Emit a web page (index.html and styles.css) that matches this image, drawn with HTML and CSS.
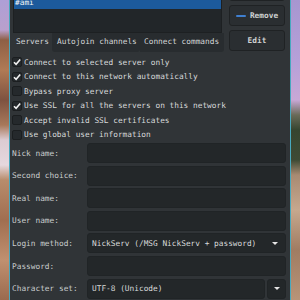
FILE: index.html
```html
<!DOCTYPE html>
<html lang="en">
<head>
    <meta charset="UTF-8">
    <meta name="viewport" content="width=device-width, initial-scale=1.0">
    <title>Network editor</title>
    <link rel="stylesheet" href="styles.css">
</head>
<body>
    <div class="wall wall_left"></div>
    <div class="window">
        <div class="top">
            <div class="notebook">
                <div class="server_list">
                    <div class="row selected">#ami</div>
                </div>
                <div class="tabs">
                    <div class="tab active tab_servers">Servers</div>
                    <div class="tab tab_autojoin">Autojoin channels</div>
                    <div class="tab tab_connect">Connect commands</div>
                </div>
            </div>
            <div class="buttons">
                <div class="btn">Add</div>
                <div class="btn"><span class="minus"></span>Remove</div>
                <div class="btn">Edit</div>
            </div>
        </div>

        <ul class="checks">
            <li><span class="box checked"><svg viewBox="0 0 10 10"><path d="M2 5.2 L4.1 7.3 L8.2 2.4"/></svg></span>Connect to selected server only</li>
            <li><span class="box checked"><svg viewBox="0 0 10 10"><path d="M2 5.2 L4.1 7.3 L8.2 2.4"/></svg></span>Connect to this network automatically</li>
            <li><span class="box"></span>Bypass proxy server</li>
            <li><span class="box checked"><svg viewBox="0 0 10 10"><path d="M2 5.2 L4.1 7.3 L8.2 2.4"/></svg></span>Use SSL for all the servers on this network</li>
            <li><span class="box"></span>Accept invalid SSL certificates</li>
            <li><span class="box"></span>Use global user information</li>
        </ul>

        <div class="form">
            <label>Nick name:</label>
            <div class="field"></div>
            <label>Second choice:</label>
            <div class="field"></div>
            <label>Real name:</label>
            <div class="field"></div>
            <label>User name:</label>
            <div class="field"></div>
            <label>Login method:</label>
            <div class="field combo">NickServ (/MSG NickServ + password)<span class="arrow"></span></div>
            <label>Password:</label>
            <div class="field"></div>
            <label>Character set:</label>
            <div class="entry_combo">
                <div class="field">UTF-8 (Unicode)</div>
                <div class="field combo_btn"><span class="arrow"></span></div>
            </div>
        </div>
    </div>
    <div class="wall wall_right"></div>
</body>
</html>
```

FILE: styles.css
```css
html, body{
    margin: 0;
    height: 300px;
    overflow: hidden;
}
body{
    display: flex;
    font-family: "DejaVu Sans Mono", "Liberation Mono", monospace;
    font-size: 7.8px;
    color: #d8dadb;
}
.wall{
    height: 300px;
}
.wall_left{
    width: 9px;
    background: linear-gradient(to bottom, #ae9fd6 0, #b9a0cc 30px, #8e5f45 40px, #b07a55 70px, #7e5240 100px, #a8785a 125px, #dccbd2 140px, #e6d8de 165px, #b88c6c 180px, #a06e50 220px, #c09070 260px, #9a6a4e 300px);
}
.wall_right{
    flex: 1;
    background: linear-gradient(to bottom, #a796d0 0, #b6a0d8 60px, #c8a8d6 100px, #6a6a58 115px, #36452f 130px, #3e4a34 160px, #a88a72 175px, #c6a88e 210px, #a07c62 250px, #b89478 300px);
}
.window{
    width: 275px;
    height: 300px;
    background: #303437;
    border-left: 1px solid #47a9bf;
    border-right: 1px solid #47a9bf;
    padding: 0 4px 0 1px;
    flex-shrink: 0;
}

/* top: server list + buttons */
.top{
    display: flex;
    gap: 5px;
    margin-top: -20px;
    padding-left: 2px;
}
.notebook{
    width: 211px;
}
.server_list{
    height: 53px;
    box-sizing: border-box;
    width: 209px;
    background: #222629;
    border: 1px solid #1d2022;
    padding-top: 15px;
}
.row{
    height: 13px;
    line-height: 13px;
    padding-left: 1px;
}
.row.selected{
    background: #1c5a9c;
    color: #f4f6f8;
}
.tabs{
    display: flex;
    height: 19px;
}
.tab{
    line-height: 18px;
    box-sizing: border-box;
    background: #282c2f;
    color: #d4d6d7;
}
.tab.active{
    background: #303437;
}
.tab_servers{
    width: 39px;
    padding-left: 3px;
}
.tab_autojoin{
    width: 88px;
    padding-left: 5px;
    border-radius: 0 0 3px 3px;
}
.tab_connect{
    width: 84px;
    padding-left: 4px;
    border-radius: 0 0 3px 0;
}
.buttons{
    width: 56px;
    display: flex;
    flex-direction: column;
    gap: 4px;
}
.btn{
    height: 21px;
    box-sizing: border-box;
    background: #2a2e31;
    border: 1px solid #1f2224;
    border-radius: 3px;
    display: flex;
    align-items: center;
    justify-content: center;
    font-weight: bold;
    color: #cfd2d3;
}
.minus{
    width: 10px;
    height: 2px;
    background: #3f7fd0;
    margin-right: 4px;
    border-radius: 1px;
}

/* check buttons */
.checks{
    list-style: none;
    margin: 2.75px 0 0;
    padding: 0;
}
.checks li{
    height: 14.5px;
    display: flex;
    align-items: center;
}
.box{
    width: 10px;
    height: 10px;
    box-sizing: border-box;
    margin: 0 2px 0 1px;
    background: #25292c;
    border: 1px solid #1b1e20;
    border-radius: 2px;
    display: flex;
}
.box svg{
    width: 10px;
    height: 10px;
    margin: -1px;
}
.box path{
    fill: none;
    stroke: #f2f2f2;
    stroke-width: 1.6;
}

/* user info form */
.form{
    display: grid;
    grid-template-columns: 75px 1fr;
    row-gap: 2.6px;
    margin-top: 1.3px;
    padding-left: 1px;
}
.form label{
    display: flex;
    align-items: center;
    color: #c9cccd;
}
.field{
    height: 20px;
    box-sizing: border-box;
    background: #232729;
    border: 1px solid #202426;
    border-radius: 3px;
    display: flex;
    align-items: center;
    padding-left: 4px;
}
.combo{
    justify-content: space-between;
    padding-right: 7px;
}
.arrow{
    width: 0;
    height: 0;
    border-left: 3px solid transparent;
    border-right: 3px solid transparent;
    border-top: 3px solid #e6e6e6;
}
.entry_combo{
    display: flex;
    gap: 2px;
}
.entry_combo .field:first-child{
    flex: 1;
}
.combo_btn{
    width: 19px;
    padding: 0;
    justify-content: center;
}
```
